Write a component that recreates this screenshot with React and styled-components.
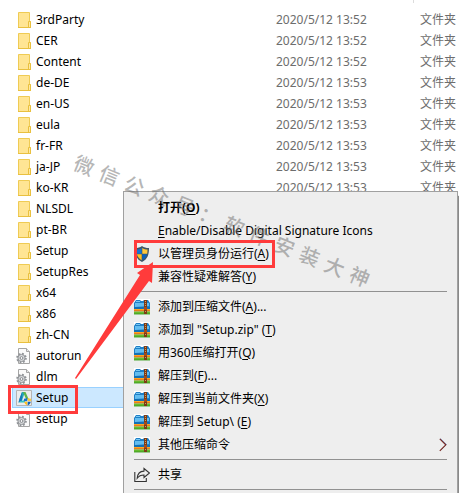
import styled, { createGlobalStyle, css } from "styled-components";

const GlobalStyle = createGlobalStyle`
  * {
    box-sizing: border-box;
  }

  body {
    margin: 0;
    background-color: #fff;
    color: #000;
    font-family: "Noto Sans", "Noto Sans CJK SC", sans-serif;
    font-size: 12px;
  }
`;

const Explorer = styled.main`
  position: relative;
  min-height: 100vh;
  overflow: hidden;
`;

const HeaderEdge = styled.div`
  height: 9px;
  padding-left: 413px;

  &::before {
    content: "";
    display: block;
    width: 1px;
    height: 3px;
    background-color: #dcdcdc;
  }
`;

const FileTable = styled.table`
  width: calc(100% - 12px);
  margin-left: 12px;
  table-layout: fixed;
  border-collapse: collapse;

  .name {
    width: 264px;
  }

  .date {
    width: 144px;
  }
`;

const FileRow = styled.tr`
  height: 21px;

  ${({ $selected }) =>
    $selected &&
    css`
      background-color: #cce8ff;
      outline: 1px solid #99d1ff;
      outline-offset: -1px;
    `}
`;

const Cell = styled.td`
  padding: 0;
  line-height: 20px;
  white-space: nowrap;
  color: #6d6d6d;
`;

const FileName = styled.div`
  display: flex;
  align-items: center;
  gap: 4px;
  height: 21px;
  padding-left: 4px;
  color: #000;

  svg {
    flex: none;
  }
`;

const Menu = styled.div`
  position: absolute;
  top: 191px;
  left: 123px;
  right: 1px;
  padding: 4px 10px;
  border: 1px solid #a0a0a0;
  border-bottom: 0;
  background-color: #eee;
  box-shadow: 2px 5px 1px #8a8a8a;
`;

const MenuItem = styled.button`
  display: flex;
  align-items: center;
  gap: 8px;
  width: 100%;
  height: 23px;
  padding: 0;
  border: 0;
  background: none;
  color: #000;
  font: inherit;
  font-weight: ${({ $bold }) => ($bold ? 700 : 400)};
  line-height: 20px;
  text-align: left;
  white-space: pre;

  u {
    text-underline-offset: 2px;
  }

  .icon {
    display: flex;
    flex: none;
    width: 16px;
  }

  .label {
    flex: 1;
  }
`;

const Divider = styled.hr`
  height: 1px;
  margin: 3px 0;
  border: 0;
  background-color: #919191;
`;

const Marker = styled.div`
  position: absolute;
  top: ${({ $top }) => $top}px;
  left: ${({ $left }) => $left}px;
  width: ${({ $width }) => $width}px;
  height: ${({ $height }) => $height}px;
  border: 3px solid #ff3b3b;
  pointer-events: none;
`;

const Arrow = styled.svg`
  position: absolute;
  top: 260px;
  left: 74px;
  pointer-events: none;
`;

const Watermark = styled.div`
  position: absolute;
  top: 152px;
  left: 74px;
  display: flex;
  gap: 7px;
  color: rgba(110, 110, 110, 0.5);
  font-size: 20px;
  font-weight: 500;
  line-height: 28px;
  transform: rotate(22deg);
  transform-origin: 10px 14px;
  pointer-events: none;
`;

const FolderIcon = () => (
  <svg width="16" height="18" viewBox="0 0 16 18">
    <path d="M2.5 1.5h11v9h1v6h-12z" fill="#ffe594" stroke="#efcb54" />
    <path d="M12.5 16v-5.5h2v6h-2z" fill="#ffe9a3" stroke="#e9c03f" />
    <path d="M2 16.5h13" stroke="#e9c03f" />
  </svg>
);

const Gear = () => (
  <g>
    <circle cx="5.5" cy="11" r="4.3" fill="none" stroke="#8f9296" strokeWidth="2" strokeDasharray="1.7 1.68" />
    <circle cx="5.5" cy="11" r="3.6" fill="#d6d8da" stroke="#909397" />
    <circle cx="5.5" cy="11" r="1.4" fill="#fff" stroke="#85888c" />
  </g>
);

const ConfigIcon = () => (
  <svg width="16" height="18" viewBox="0 0 16 18">
    <path d="M2.5 1.5h8l3 3v12h-11z" fill="#fafafa" stroke="#a5a5a5" />
    <path d="M10.5 1.5v3h3" fill="#e8e8e8" stroke="#a5a5a5" />
    <Gear />
  </svg>
);

const ShieldFaces = () => (
  <>
    <path d="M7.7 2v5.8H2.8c-.3-1.4-.3-2.7-.3-4.2 2 0 3.600-.5 5.200-1.600z" fill="#1474d4" />
    <path d="M8.300 2v5.800h4.900c.3-1.400.3-2.700.3-4.200-2 0-3.600-.5-5.200-1.600z" fill="#ffc83a" />
    <path d="M7.700 8.300v5.900C5 12.800 3.500 10.800 2.900 8.300z" fill="#ffc020" />
    <path d="M8.300 8.300v5.900c2.700-1.400 4.200-3.400 4.800-5.900z" fill="#0b62bd" />
  </>
);

const ShieldIcon = () => (
  <svg width="16" height="16" viewBox="0 0 16 16">
    <path d="M8 0c2 1.500 4 2 7 2 0 6-1 11-7 14C2 13 1 8 1 2c3 0 5-.5 7-2z" fill="#3f5566" />
    <ShieldFaces />
  </svg>
);

const SetupIcon = () => (
  <svg width="16" height="16" viewBox="0 0 16 16">
    <path d="M.5.5h15v15H.5z" fill="#ececec" stroke="#b4b4b4" />
    <path d="M6 2h3L6 10.500 2.500 12.500z" fill="#23a6b5" />
    <path d="M6 2 3.500 8.500 2.500 12.500 6 10.500z" fill="#1779b8" />
    <path d="M7 2h2.500L13 10l-3-1z" fill="#5fb54a" />
    <path d="M5 11 2.500 12.500 9 12.500V10z" fill="#35c4c0" />
    <svg x="7" y="7" width="9" height="9" viewBox="1 1 14 14">
      <ShieldFaces />
    </svg>
  </svg>
);

const ArchiveIcon = () => (
  <svg width="16" height="16" viewBox="0 0 16 16">
    <path d="M0 0h16v16H0z" fill="#fff" />
    <path d="M0 4l2-3h4l1 1h2l1-1h4l2 3v5H0z" fill="#1f7fc6" />
    <path d="M1 4h14v3L1 8z" fill="#63bdf0" />
    <path d="M2 2h4v1H2z" fill="#75c8f4" />
    <path d="M0 8h16v2H0z" fill="#1470b5" />
    <path d="M0 10h16v2H0z" fill="#ffa51f" />
    <path d="M0 11.500h16v1H0z" fill="#d5521d" />
    <path d="M0 12.500h16V15H0z" fill="#65bd2e" />
    <path d="M0 14.500h16v1H0z" fill="#3c9622" />
    <path d="M10 1h3v14h-3z" fill="#7c3b16" />
    <path d="M11.500 2v12" stroke="#d49a56" strokeDasharray="1 1" />
    <path d="M10 8h3v3h-3z" fill="#a64b1b" />
  </svg>
);

const ShareIcon = () => (
  <svg width="16" height="16" viewBox="0 0 16 16" fill="none" stroke="#333" strokeWidth="1.1">
    <path d="M.8 5v9.500h11.500V11" />
    <path d="M10 1.500 15.500 6 10 10.500V8C6.500 8 4.800 9 3.200 11.200 3.500 7 6 4.300 10 4.100z" />
  </svg>
);

const SubmenuIcon = () => (
  <svg width="8" height="14" viewBox="0 0 8 14" fill="none">
    <path d="M1.500.5 7.500 6.500l-6 6" stroke="#8fb4e8" />
    <path d="M.8.8 6.800 6.800l-6 6" stroke="#7a2a22" strokeWidth="1.2" />
  </svg>
);

const fileIcons = {
  folder: <FolderIcon />,
  config: <ConfigIcon />,
  setup: <SetupIcon />,
};

const folders = [
  "3rdParty",
  "CER",
  "Content",
  "de-DE",
  "en-US",
  "eula",
  "fr-FR",
  "ja-JP",
  "ko-KR",
  "NLSDL",
  "pt-BR",
  "Setup",
  "SetupRes",
  "x64",
  "x86",
  "zh-CN",
];

const files = [
  ...folders.map((name, index) => ({
    name,
    icon: "folder",
    date: index < 3 ? "2020/5/12 13:52" : "2020/5/12 13:53",
    type: "文件夹",
  })),
  { name: "autorun", icon: "config" },
  { name: "dlm", icon: "config" },
  { name: "Setup", icon: "setup", selected: true },
  { name: "setup", icon: "config" },
];

const menuGroups = [
  [
    { text: "打开(", hotkey: "O", after: ")", bold: true },
    { hotkey: "E", after: "nable/Disable Digital Signature Icons" },
    { icon: <ShieldIcon />, text: "以管理员身份运行(", hotkey: "A", after: ")" },
    { text: "兼容性疑难解答(", hotkey: "Y", after: ")" },
  ],
  [
    { icon: <ArchiveIcon />, text: "添加到压缩文件(", hotkey: "A", after: ")..." },
    { icon: <ArchiveIcon />, text: '添加到 "Setup.zip" (', hotkey: "T", after: ")" },
    { icon: <ArchiveIcon />, text: "用360压缩打开(", hotkey: "Q", after: ")" },
    { icon: <ArchiveIcon />, text: "解压到(", hotkey: "F", after: ")..." },
    { icon: <ArchiveIcon />, text: "解压到当前文件夹(", hotkey: "X", after: ")" },
    { icon: <ArchiveIcon />, text: "解压到 Setup\\ (", hotkey: "E", after: ")" },
    { icon: <ArchiveIcon />, text: "其他压缩命令", submenu: true },
  ],
  [{ icon: <ShareIcon />, text: "共享" }],
];

const FileList = () => (
  <FileTable>
    <colgroup>
      <col className="name" />
      <col className="date" />
      <col />
    </colgroup>
    <tbody>
      {files.map(({ name, icon, date, type, selected }, index) => (
        <FileRow key={index} $selected={selected}>
          <Cell>
            <FileName>
              {fileIcons[icon]}
              {name}
            </FileName>
          </Cell>
          <Cell>{date}</Cell>
          <Cell>{type}</Cell>
        </FileRow>
      ))}
    </tbody>
  </FileTable>
);

const MenuGroup = ({ items }) => (
  <>
    {items.map(({ icon, text, hotkey, after, bold, submenu }, index) => (
      <MenuItem key={index} type="button" role="menuitem" $bold={bold}>
        <span className="icon">{icon}</span>
        <span className="label">
          {text}
          {hotkey && <u>{hotkey}</u>}
          {after}
        </span>
        {submenu && <SubmenuIcon />}
      </MenuItem>
    ))}
    <Divider />
  </>
);

const App = () => {
  return (
    <Explorer>
      <GlobalStyle />
      <HeaderEdge />
      <FileList />
      <Menu role="menu">
        {menuGroups.map((items, index) => (
          <MenuGroup key={index} items={items} />
        ))}
      </Menu>
      <Watermark>
        {[..."微信公众号：软件安装大神"].map((char, index) => (
          <span key={index}>{char}</span>
        ))}
      </Watermark>
      <Marker $top={385} $left={8} $width={70} $height={29} />
      <Marker $top={240} $left={134} $width={141} $height={28} />
      <Arrow width="80" height="120" viewBox="0 0 80 120">
        <path d="M79 2 63 13l3 2L1 118l1 1 73-98 3 2z" fill="#ff3b3b" />
      </Arrow>
    </Explorer>
  );
};

export default App;
